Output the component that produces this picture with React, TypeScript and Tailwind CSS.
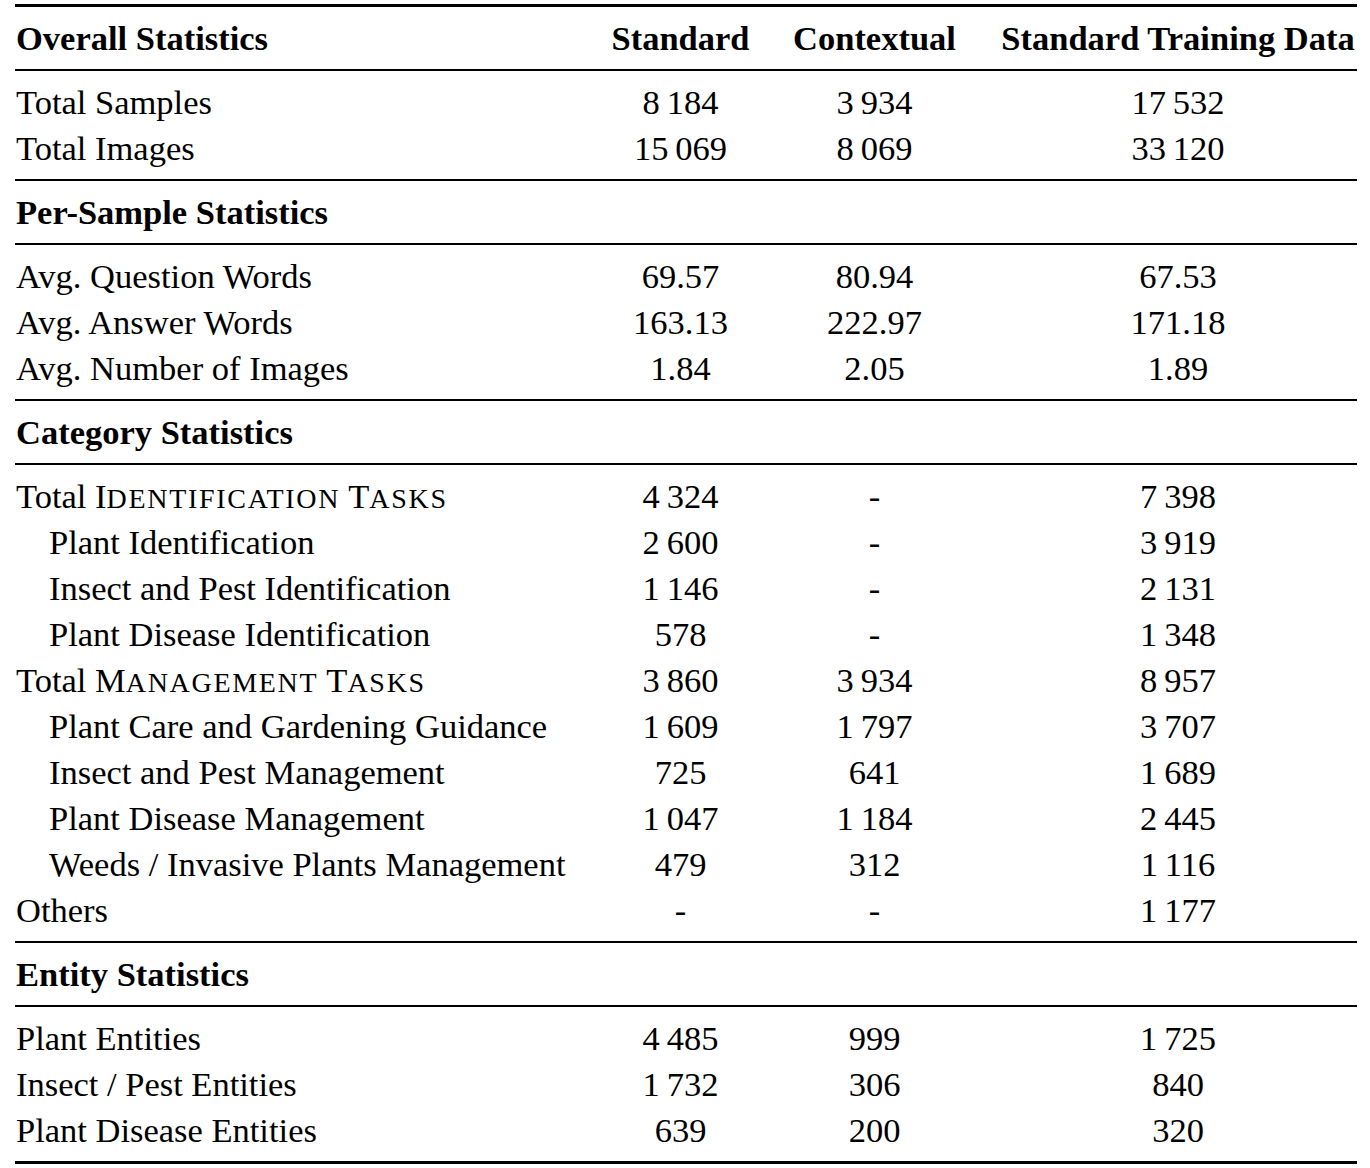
type Row = {
  label: React.ReactNode;
  std?: string;
  ctx?: string;
  train?: string;
  indent?: boolean;
};

const T = "\u2009";

// hand-made small caps, the synthesized ones come out too small
function SmallCaps({ text }: { text: string }) {
  return (
    <>
      {text.split(" ").map((w, i) => (
        <span key={i}>
          {i > 0 ? " " : ""}
          {w[0]}
          <span className="text-[28px] tracking-[1.7px]">{w.slice(1).toUpperCase()}</span>
        </span>
      ))}
    </>
  );
}

const sections: { title: string; rows: Row[] }[] = [
  {
    title: "Per-Sample Statistics",
    rows: [
      { label: "Avg. Question Words", std: "69.57", ctx: "80.94", train: "67.53" },
      { label: "Avg. Answer Words", std: "163.13", ctx: "222.97", train: "171.18" },
      { label: "Avg. Number of Images", std: "1.84", ctx: "2.05", train: "1.89" },
    ],
  },
  {
    title: "Category Statistics",
    rows: [
      {
        label: (
          <>
            Total <SmallCaps text="Identification Tasks" />
          </>
        ),
        std: `4${T}324`,
        ctx: "-",
        train: `7${T}398`,
      },
      { label: "Plant Identification", std: `2${T}600`, ctx: "-", train: `3${T}919`, indent: true },
      { label: "Insect and Pest Identification", std: `1${T}146`, ctx: "-", train: `2${T}131`, indent: true },
      { label: "Plant Disease Identification", std: "578", ctx: "-", train: `1${T}348`, indent: true },
      {
        label: (
          <>
            Total <SmallCaps text="Management Tasks" />
          </>
        ),
        std: `3${T}860`,
        ctx: `3${T}934`,
        train: `8${T}957`,
      },
      { label: "Plant Care and Gardening Guidance", std: `1${T}609`, ctx: `1${T}797`, train: `3${T}707`, indent: true },
      { label: "Insect and Pest Management", std: "725", ctx: "641", train: `1${T}689`, indent: true },
      { label: "Plant Disease Management", std: `1${T}047`, ctx: `1${T}184`, train: `2${T}445`, indent: true },
      { label: "Weeds / Invasive Plants Management", std: "479", ctx: "312", train: `1${T}116`, indent: true },
      { label: "Others", std: "-", ctx: "-", train: `1${T}177` },
    ],
  },
  {
    title: "Entity Statistics",
    rows: [
      { label: "Plant Entities", std: `4${T}485`, ctx: "999", train: `1${T}725` },
      { label: "Insect / Pest Entities", std: `1${T}732`, ctx: "306", train: "840" },
      { label: "Plant Disease Entities", std: "639", ctx: "200", train: "320" },
    ],
  },
];

const overall: Row[] = [
  { label: "Total Samples", std: `8${T}184`, ctx: `3${T}934`, train: `17${T}532` },
  { label: "Total Images", std: `15${T}069`, ctx: `8${T}069`, train: `33${T}120` },
];

function TableRow({ row, bold }: { row: Row; bold?: boolean }) {
  return (
    <div
      className={`grid grid-cols-[575px_181px_207px_379px] h-[46px] leading-[46px] whitespace-nowrap ${
        bold ? "font-bold" : ""
      }`}
    >
      <div className={row.indent ? "pl-[34px]" : "pl-px"}>{row.label}</div>
      <div className="text-center">{row.std}</div>
      <div className="text-center">{row.ctx}</div>
      <div className="text-center pl-[21px]">{row.train}</div>
    </div>
  );
}

export default function App() {
  return (
    <div className="w-[1370px] h-[1168px] bg-white pt-[4px] pl-[15px] text-black text-[34.5px] font-['Liberation_Serif','Times_New_Roman',serif]">
      <div className="w-[1342px] border-t-[3px] border-b-[3px] border-black">
        {/* Header */}
        <div className="py-2">
          <TableRow
            bold
            row={{ label: "Overall Statistics", std: "Standard", ctx: "Contextual", train: "Standard Training Data" }}
          />
        </div>

        <div className="border-t-2 border-black py-2">
          {overall.map((r, i) => (
            <TableRow key={i} row={r} />
          ))}
        </div>

        {sections.map((s) => (
          <div key={s.title}>
            <div className="border-t-2 border-black py-2">
              <TableRow bold row={{ label: s.title }} />
            </div>
            <div className="border-t-2 border-black py-2">
              {s.rows.map((r, i) => (
                <TableRow key={i} row={r} />
              ))}
            </div>
          </div>
        ))}
      </div>
    </div>
  );
}
